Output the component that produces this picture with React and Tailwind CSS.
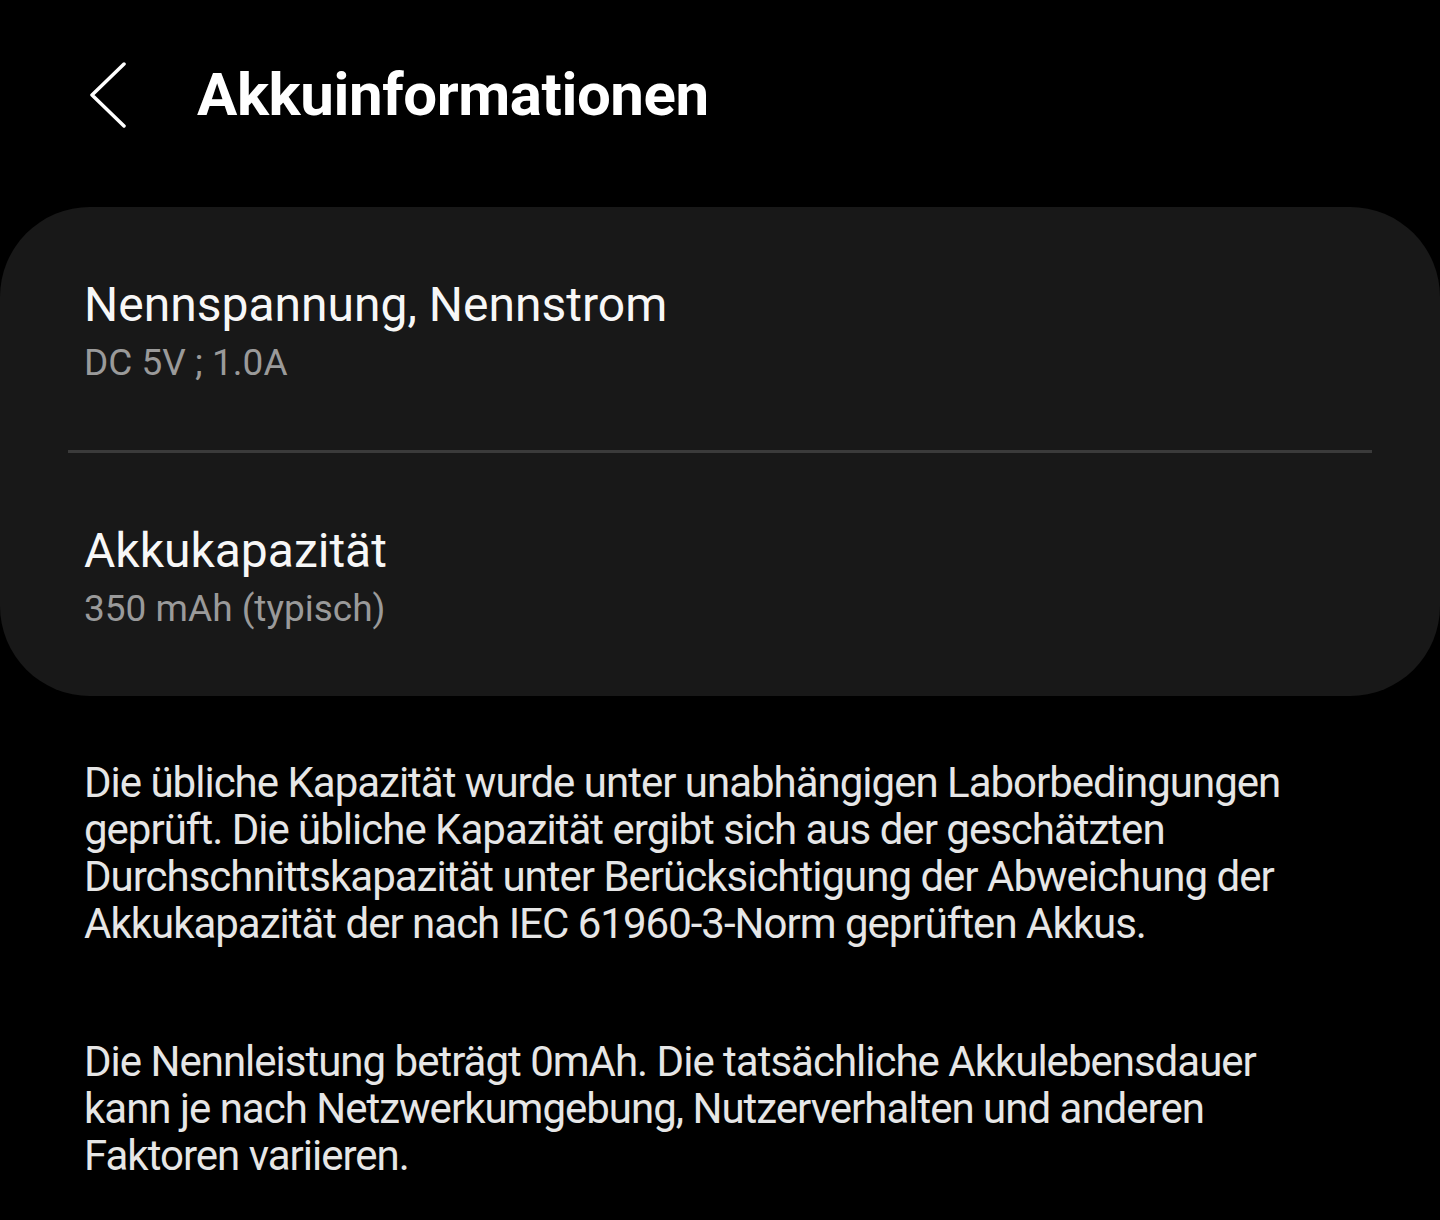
import React from "react";

function Item({ title, value }) {
  return (
    <div className="pl-[84px] pr-[70px] pt-[69px] pb-[65px]">
      <div className="text-[48px] leading-[58px] text-[#f7f7f7]">{title}</div>
      <div className="mt-[7px] text-[37px] leading-[44px] text-[#9a9a9a]">{value}</div>
    </div>
  );
}

export default function App() {
  return (
    <div
      className="min-h-[1220px] w-full bg-black text-white"
      style={{ fontFamily: "Roboto, 'Noto Sans', sans-serif" }}
    >
      <header className="flex h-[207px] items-start">
        <div className="flex items-center pt-[62px]">
          <svg
            width="40"
            height="66"
            viewBox="0 0 40 66"
            className="ml-[88px]"
            fill="none"
            stroke="#ffffff"
            strokeWidth="3.5"
            strokeLinecap="round"
            strokeLinejoin="round"
          >
            <polyline points="36,2 4,33 36,64" />
          </svg>
          <h1 className="ml-[69px] text-[60px] font-bold leading-[66px] tracking-[-0.4px] text-white">
            Akkuinformationen
          </h1>
        </div>
      </header>

      <section className="rounded-[90px] bg-[#181818]">
        <Item title="Nennspannung, Nennstrom" value="DC 5V ; 1.0A" />
        <div className="mx-[68px] h-[3px] bg-[#3a3a3a]" />
        <Item title="Akkukapazität" value="350 mAh (typisch)" />
      </section>

      <div className="pl-[84px] pr-[70px] pt-[63px] text-[42px] leading-[47px] tracking-[-1px] whitespace-nowrap text-[#e6e6e6]">
        <p>
          Die übliche Kapazität wurde unter unabhängigen Laborbedingungen
          <br />
          geprüft. Die übliche Kapazität ergibt sich aus der geschätzten
          <br />
          Durchschnittskapazität unter Berücksichtigung der Abweichung der
          <br />
          Akkukapazität der nach IEC 61960-3-Norm geprüften Akkus.
        </p>
        <p className="mt-[91px]">
          Die Nennleistung beträgt 0mAh. Die tatsächliche Akkulebensdauer
          <br />
          kann je nach Netzwerkumgebung, Nutzerverhalten und anderen
          <br />
          Faktoren variieren.
        </p>
      </div>
    </div>
  );
}
